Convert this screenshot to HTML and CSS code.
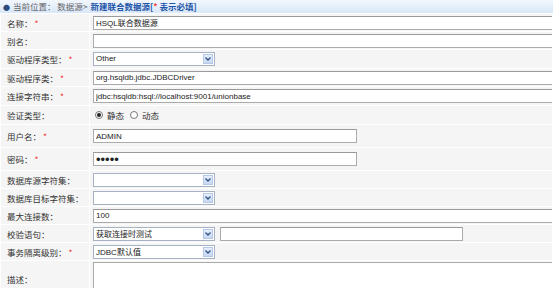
FILE: index.html
```html
<!DOCTYPE html>
<html lang="zh">
<head>
<meta charset="UTF-8">
<title>新建联合数据源</title>
<link rel="stylesheet" href="styles.css">
</head>
<body>
<div class="crumb">
  <span class="dot">&#9679;</span>
  <span class="crumb-gray">当前位置： 数据源&gt;</span>
  <span class="crumb-title">新建联合数据源[<span class="req">*</span> 表示必填]</span>
</div>

<table class="form-table">
  <tr>
    <td class="label">名称：<span class="req">*</span></td>
    <td><input type="text" class="txt wide" value="HSQL联合数据源"></td>
  </tr>
  <tr>
    <td class="label">别名：</td>
    <td><input type="text" class="txt wide" value=""></td>
  </tr>
  <tr class="h19">
    <td class="label">驱动程序类型：<span class="req">*</span></td>
    <td>
      <div class="sel"><span class="sel-text">Other</span><span class="sel-btn"><svg width="6" height="4" viewBox="0 0 6 4"><path d="M0.5 0.5 L3 3 L5.5 0.5" fill="none" stroke="#2d4f84" stroke-width="1.3"/></svg></span></div>
    </td>
  </tr>
  <tr>
    <td class="label">驱动程序类：<span class="req">*</span></td>
    <td><input type="text" class="txt wide" value="org.hsqldb.jdbc.JDBCDriver"></td>
  </tr>
  <tr class="h19">
    <td class="label">连接字符串：<span class="req">*</span></td>
    <td><input type="text" class="txt wide" value="jdbc:hsqldb:hsql://localhost:9001/unionbase"></td>
  </tr>
  <tr class="h19">
    <td class="label">验证类型：</td>
    <td>
      <div class="radios">
        <span class="radio on"></span><span class="radio-text">静态</span>
        <span class="radio"></span><span class="radio-text">动态</span>
      </div>
    </td>
  </tr>
  <tr class="h23">
    <td class="label">用户名：<span class="req">*</span></td>
    <td><input type="text" class="txt mid" value="ADMIN"></td>
  </tr>
  <tr class="h23">
    <td class="label">密码：<span class="req">*</span></td>
    <td><input type="password" class="txt mid pwd" value="admin"></td>
  </tr>
  <tr>
    <td class="label">数据库源字符集：</td>
    <td>
      <div class="sel"><span class="sel-text"></span><span class="sel-btn"><svg width="6" height="4" viewBox="0 0 6 4"><path d="M0.5 0.5 L3 3 L5.5 0.5" fill="none" stroke="#2d4f84" stroke-width="1.3"/></svg></span></div>
    </td>
  </tr>
  <tr>
    <td class="label">数据库目标字符集：</td>
    <td>
      <div class="sel"><span class="sel-text"></span><span class="sel-btn"><svg width="6" height="4" viewBox="0 0 6 4"><path d="M0.5 0.5 L3 3 L5.5 0.5" fill="none" stroke="#2d4f84" stroke-width="1.3"/></svg></span></div>
    </td>
  </tr>
  <tr>
    <td class="label">最大连接数：</td>
    <td><input type="text" class="txt wide" value="100"></td>
  </tr>
  <tr>
    <td class="label">校验语句：</td>
    <td>
      <div class="pair">
        <div class="sel"><span class="sel-text cjk">获取连接时测试</span><span class="sel-btn"><svg width="6" height="4" viewBox="0 0 6 4"><path d="M0.5 0.5 L3 3 L5.5 0.5" fill="none" stroke="#2d4f84" stroke-width="1.3"/></svg></span></div>
        <input type="text" class="txt sql" value="">
      </div>
    </td>
  </tr>
  <tr>
    <td class="label">事务隔离级别：<span class="req">*</span></td>
    <td>
      <div class="sel"><span class="sel-text">JDBC<span class="cjk">默认值</span></span><span class="sel-btn"><svg width="6" height="4" viewBox="0 0 6 4"><path d="M0.5 0.5 L3 3 L5.5 0.5" fill="none" stroke="#2d4f84" stroke-width="1.3"/></svg></span></div>
    </td>
  </tr>
  <tr class="desc">
    <td class="label">描述：</td>
    <td><textarea class="area"></textarea></td>
  </tr>
</table>
</body>
</html>
```

FILE: styles.css
```css
body {
  margin: 0;
  font-family: "Noto Sans CJK SC", "Liberation Sans", sans-serif;
  font-size: 8.5px;
  color: #333;
  background-color: #fff;
  overflow: hidden;
}
.crumb {
  height: 13px;
  line-height: 13px;
  padding-left: 3px;
  background: linear-gradient(#f2f7fe, #d9e7f8);
  border-bottom: 1px solid #98b2d8;
  white-space: nowrap;
}
.dot {
  color: #2b4a7c;
  font-size: 7px;
  margin-right: 1px;
}
.crumb-gray {
  color: #666;
}
.crumb-title {
  color: #1d55a8;
  font-weight: bold;
  margin-left: 1px;
}
.req {
  color: #f03c3c;
  margin-left: 2px;
}
.crumb-title .req {
  margin-left: 0;
}
.form-table {
  border-collapse: collapse;
  width: 100%;
  table-layout: fixed;
  border-left: 1px solid #6d90c8;
  margin-top: -1px;
}
.form-table tr {
  height: 18px;
  background-color: #f5f5f5;
}
.form-table tr.h19 { height: 19px; }
.form-table tr.h23 { height: 23px; }
.form-table tr.desc { height: 36px; }
.form-table td {
  border: 1px solid #fff;
  padding: 0 0 0 3px;
  vertical-align: middle;
  white-space: nowrap;
  overflow: hidden;
  line-height: 12px;
}
.form-table td.label {
  width: 82px;
  padding-left: 6px;
}
.txt {
  box-sizing: border-box;
  height: 14px;
  margin: 0;
  padding: 0 2px;
  border: 1px solid #ababab;
  border-top-color: #9a9a9a;
  background: #fff;
  font-family: "Liberation Sans", "Noto Sans CJK SC", sans-serif;
  font-size: 8px;
  color: #222;
  display: block;
  outline: none;
}
.txt.wide { width: 520px; }
.txt.mid { width: 264px; }
.txt.sql { width: 243px; }
.pwd {
  font-size: 13px;
  letter-spacing: 0;
}
.sel {
  box-sizing: border-box;
  width: 122px;
  height: 14px;
  border: 1px solid #a7b3c4;
  background: #fff;
  display: flex;
  align-items: stretch;
}
.sel-text {
  flex: 1;
  padding-left: 2px;
  font-family: "Liberation Sans", "Noto Sans CJK SC", sans-serif;
  font-size: 8px;
  line-height: 12px;
  color: #222;
  overflow: hidden;
}
.cjk {
  font-family: "Noto Sans CJK SC", sans-serif;
}
.sel-btn {
  width: 10px;
  margin: 1px;
  background: linear-gradient(#e6eefa, #c9d9f2);
  border: 1px solid #b5c8e8;
  box-sizing: border-box;
  display: flex;
  align-items: center;
  justify-content: center;
}
.pair {
  display: flex;
  align-items: center;
  gap: 5px;
}
.radios {
  display: flex;
  align-items: center;
  padding-left: 2px;
}
.radio {
  box-sizing: border-box;
  width: 8px;
  height: 8px;
  border: 1px solid #777;
  border-radius: 50%;
  background: #fff;
  margin-right: 4px;
  position: relative;
}
.radio.on::after {
  content: "";
  position: absolute;
  left: 1px;
  top: 1px;
  width: 4px;
  height: 4px;
  border-radius: 50%;
  background: #222;
}
.radio-text {
  margin-right: 6px;
}
.area {
  box-sizing: border-box;
  display: block;
  width: 520px;
  height: 34px;
  margin: 1px 0 0;
  border: 1px solid #ababab;
  background: #fff;
  resize: none;
}
```
